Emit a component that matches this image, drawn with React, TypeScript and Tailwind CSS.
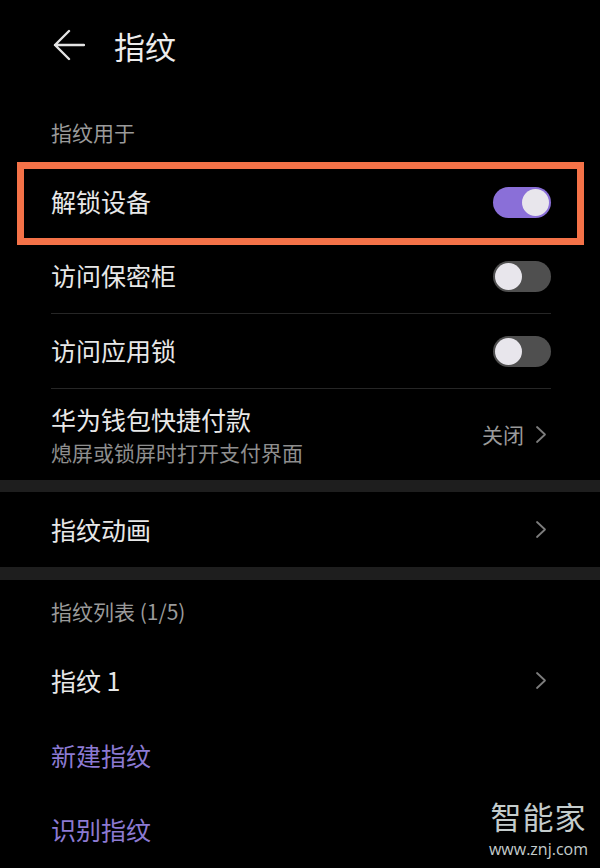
import React, { useState } from 'react';

const font = { fontFamily: '"Noto Sans CJK SC", "Noto Sans", sans-serif' };

const Toggle = ({ on, onClick }: { on: boolean; onClick: () => void }) => (
    <button
        onClick={onClick}
        className={`w-[58px] h-[31px] rounded-full flex items-center px-[2px] ${on ? 'bg-[#8a6fd8] justify-end' : 'bg-[#4f4f4f] justify-start'}`}
    >
        <span className="w-[27px] h-[27px] rounded-full bg-[#e8e6ec]"></span>
    </button>
);

const Chevron = () => (
    <svg width="12" height="19" viewBox="0 0 12 19" className="mr-[4px]">
        <path d="M2 2 L10 9.5 L2 17" fill="none" stroke="#7d7d7d" strokeWidth="1.8" strokeLinecap="round" strokeLinejoin="round" />
    </svg>
);

const App = () => {
    const [unlock, setUnlock] = useState(true);
    const [safe, setSafe] = useState(false);
    const [appLock, setAppLock] = useState(false);

    return (
        <div className="relative w-[600px] h-[868px] bg-black overflow-hidden" style={font}>
            {/* Top bar */}
            <div className="h-[90px] flex items-center pl-[53px]">
                <svg width="32" height="32" viewBox="0 0 32 32">
                    <path d="M2 16 H31 M16 2 L2 16 L16 30" fill="none" stroke="#e4e4e4" strokeWidth="2.4" strokeLinecap="round" strokeLinejoin="round" />
                </svg>
                <span className="ml-[29px] text-[31px] leading-none text-[#ececec]">指纹</span>
            </div>

            {/* Section header */}
            <div className="h-[75px] pl-[51px] pt-[30px]">
                <span className="text-[21px] leading-[24px] text-[#9a9a9a]">指纹用于</span>
            </div>

            {/* Unlock device, highlighted */}
            <div className="relative">
                <div className="h-[74px] ml-[51px] mr-[49px] flex items-center justify-between">
                    <span className="text-[25px] text-[#e8e8e8]">解锁设备</span>
                    <Toggle on={unlock} onClick={() => setUnlock(!unlock)} />
                </div>
                <div className="absolute left-[17px] right-[16px] top-[-3px] bottom-[-6px] border-[7px] border-[#f47248] pointer-events-none"></div>
            </div>

            <div className="ml-[51px] mr-[49px]">
                <div className="h-[75px] flex items-center justify-between border-b border-[#262626]">
                    <span className="text-[25px] text-[#e8e8e8]">访问保密柜</span>
                    <Toggle on={safe} onClick={() => setSafe(!safe)} />
                </div>
                <div className="h-[75px] flex items-center justify-between border-b border-[#262626]">
                    <span className="text-[25px] text-[#e8e8e8]">访问应用锁</span>
                    <Toggle on={appLock} onClick={() => setAppLock(!appLock)} />
                </div>
                <div className="h-[91px] flex items-center justify-between">
                    <div className="flex flex-col">
                        <span className="text-[25px] leading-[32px] text-[#e8e8e8]">华为钱包快捷付款</span>
                        <span className="text-[21px] leading-[30px] text-[#8e8e8e] mt-[2px]">熄屏或锁屏时打开支付界面</span>
                    </div>
                    <div className="flex items-center gap-[11px]">
                        <span className="text-[21px] text-[#9a9a9a]">关闭</span>
                        <Chevron />
                    </div>
                </div>
            </div>

            <div className="h-[12px] bg-[#1e1e1e]"></div>

            <div className="h-[75px] ml-[51px] mr-[49px] flex items-center justify-between">
                <span className="text-[25px] text-[#e8e8e8]">指纹动画</span>
                <Chevron />
            </div>

            <div className="h-[13px] bg-[#1e1e1e]"></div>

            {/* Fingerprint list */}
            <div className="h-[63px] pl-[51px] flex items-center">
                <span className="text-[21px] text-[#9a9a9a]">指纹列表 (1/5)</span>
            </div>
            <div className="h-[75px] ml-[51px] mr-[49px] flex items-center justify-between">
                <span className="text-[25px] text-[#e8e8e8]">指纹 1</span>
                <Chevron />
            </div>
            <div className="h-[75px] pl-[51px] flex items-center">
                <span className="text-[25px] text-[#8c7ad2]">新建指纹</span>
            </div>
            <div className="h-[74px] pl-[51px] flex items-center">
                <span className="text-[25px] text-[#8c7ad2]">识别指纹</span>
            </div>

            {/* Watermark */}
            <div className="absolute right-[12px] bottom-[8px] flex flex-col items-center pointer-events-none">
                <span className="text-[31px] leading-[44px] text-[#c4cccc] tracking-[1px]">智能家</span>
                <span className="text-[16px] leading-[22px] text-[#c4cccc]" style={{ fontFamily: '"Open Sans", sans-serif' }}>www.znj.com</span>
            </div>
        </div>
    );
};

export default App;
